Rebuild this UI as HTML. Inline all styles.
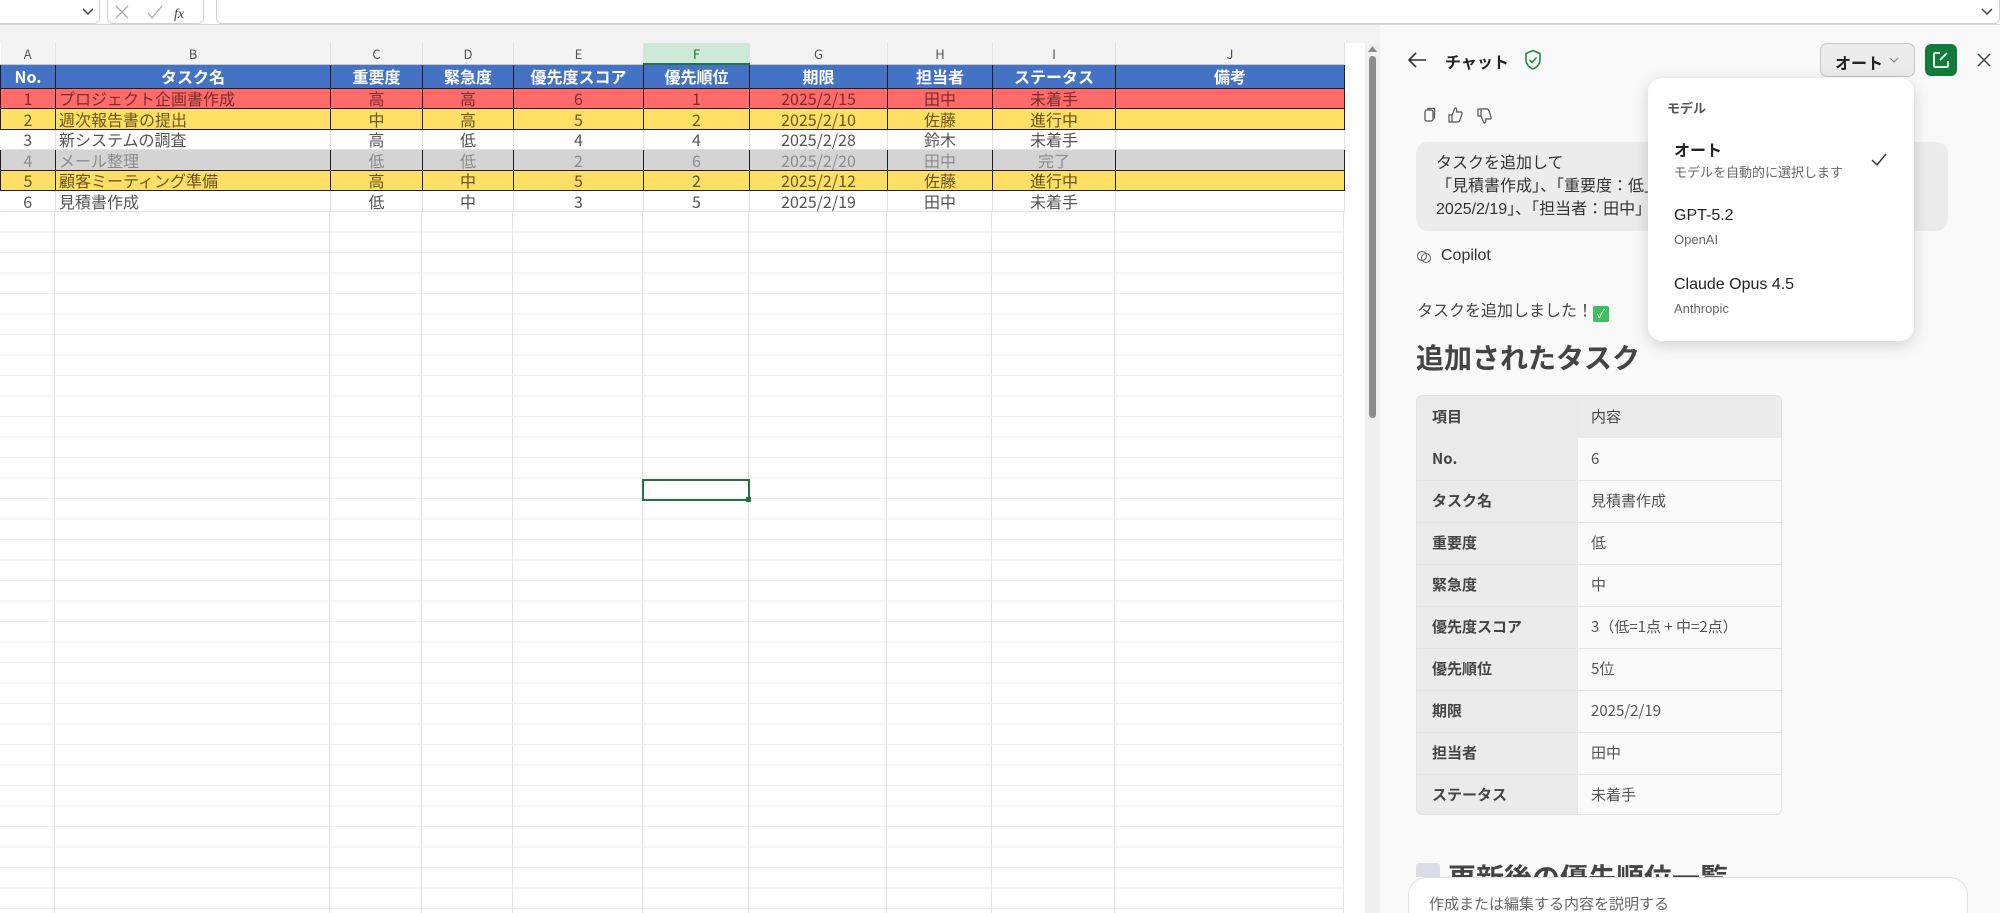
<!DOCTYPE html>
<html style="overflow:hidden;width:2000px;height:913px"><head><meta charset="utf-8">
<style>
*{box-sizing:border-box;margin:0;padding:0}
body{width:2000px;height:913px;overflow:hidden;background:#fff;font-family:"Liberation Sans","Noto Sans CJK JP",sans-serif;position:relative}
.abs{position:absolute}
#topbar{left:0;top:0;width:2000px;height:25px;background:#fff;border-bottom:1px solid #d6d6d6}
#band{left:0;top:25px;width:1380px;height:18px;background:#f3f3f3}
table.sh{position:absolute;left:0;top:43px;border-collapse:collapse;table-layout:fixed;font-family:"Noto Sans CJK JP",sans-serif;font-size:16px}
table.sh td{padding:0;text-align:center;white-space:nowrap;overflow:hidden;line-height:1}
tr.colh td{height:21px;background:#f3f3f3;color:#555;font-size:13px;border-right:1px solid #e0e0e0;border-bottom:1px solid #c8c8c8}
tr.colh td.sel{background:#cfe9d8;color:#1d6b3a;border-bottom:2px solid #217346}
tr.hd td{height:24px;background:#4472c4;color:#fff;font-weight:bold;border:1px solid #1f1f1f;font-size:16px}
tr.r td{height:20.5px;border:1px solid #1f1f1f}
tr.red td{background:#ff6b6b;color:#7a2e2e}
tr.yel td{background:#ffdf66;color:#6b5518}
tr.gry td{background:#d4d4d4;color:#8c8c8c}
tr.wht td{background:#fff;color:#555;border:none;border-right:1px solid #e1e1e1;border-bottom:1px solid #e1e1e1}
td.l{text-align:left!important;padding-left:3px!important}
#grid{left:0;top:212px;width:1344px;height:701px;
background-image:repeating-linear-gradient(to bottom,transparent 0,transparent 19.5px,#ececec 19.5px,#ececec 20.5px),
linear-gradient(to right,transparent 54px,#e1e1e1 54px,#e1e1e1 55px,transparent 55px,transparent 329px,#e1e1e1 329px,#e1e1e1 330px,transparent 330px,transparent 421px,#e1e1e1 421px,#e1e1e1 422px,transparent 422px,transparent 512px,#e1e1e1 512px,#e1e1e1 513px,transparent 513px,transparent 642px,#e1e1e1 642px,#e1e1e1 643px,transparent 643px,transparent 748px,#e1e1e1 748px,#e1e1e1 749px,transparent 749px,transparent 886px,#e1e1e1 886px,#e1e1e1 887px,transparent 887px,transparent 991px,#e1e1e1 991px,#e1e1e1 992px,transparent 992px,transparent 1114px,#e1e1e1 1114px,#e1e1e1 1115px,transparent 1115px,transparent 1343px,#e1e1e1 1343px,#e1e1e1 1344px,transparent 1344px)}
#panel{left:1380px;top:26px;width:620px;height:887px;background:#f9f9f9}
.p{position:absolute;color:#333}
.lbl{background:#ebebeb;font-weight:bold}
</style></head><body>
<div id="topbar" class="abs"></div>
<div class="abs" style="left:0;top:0;width:100px;height:24px;border:1px solid #d0d0d0;border-left:none;border-top:none;border-radius:0 0 6px 0;background:#fff"></div>
<svg class="abs" style="left:81px;top:7px" width="14" height="10"><path d="M2 2l5 5 5-5" stroke="#444" stroke-width="1.5" fill="none"/></svg>
<div class="abs" style="left:107px;top:0;width:97px;height:24px;border:1px solid #d0d0d0;border-top:none;border-radius:0 0 6px 6px;background:#fff"></div>
<svg class="abs" style="left:114px;top:4px" width="80" height="18"><path d="M2 2l12 12M14 2L2 14" stroke="#aaa" stroke-width="1.3"/><path d="M34 9l4 5 10-12" stroke="#aaa" stroke-width="1.3" fill="none"/><text x="60" y="14" font-family="Liberation Serif" font-style="italic" font-size="14" fill="#444">fx</text></svg>
<div class="abs" style="left:216px;top:0;width:1784px;height:24px;border:1px solid #d0d0d0;border-top:none;border-radius:0 0 6px 6px;background:#fff"></div>
<svg class="abs" style="left:1980px;top:7px" width="14" height="10"><path d="M2 2l5 5 5-5" stroke="#444" stroke-width="1.5" fill="none"/></svg>
<div id="band" class="abs"></div>
<div id="grid" class="abs"></div>
<table class="sh">
<colgroup><col style="width:55px"><col style="width:275px"><col style="width:92px"><col style="width:91px"><col style="width:130px"><col style="width:106px"><col style="width:138px"><col style="width:105px"><col style="width:123px"><col style="width:229px"></colgroup>
<tr class="colh"><td>A</td><td>B</td><td>C</td><td>D</td><td>E</td><td class="sel">F</td><td>G</td><td>H</td><td>I</td><td>J</td></tr>
<tr class="hd"><td>No.</td><td>タスク名</td><td>重要度</td><td>緊急度</td><td>優先度スコア</td><td>優先順位</td><td>期限</td><td>担当者</td><td>ステータス</td><td>備考</td></tr>
<tr class="r red"><td>1</td><td class="l">プロジェクト企画書作成</td><td>高</td><td>高</td><td>6</td><td>1</td><td>2025/2/15</td><td>田中</td><td>未着手</td><td></td></tr>
<tr class="r yel"><td>2</td><td class="l">週次報告書の提出</td><td>中</td><td>高</td><td>5</td><td>2</td><td>2025/2/10</td><td>佐藤</td><td>進行中</td><td></td></tr>
<tr class="r wht" style="border-top:1px solid #1f1f1f"><td>3</td><td class="l">新システムの調査</td><td>高</td><td>低</td><td>4</td><td>4</td><td>2025/2/28</td><td>鈴木</td><td>未着手</td><td></td></tr>
<tr class="r gry"><td>4</td><td class="l">メール整理</td><td>低</td><td>低</td><td>2</td><td>6</td><td>2025/2/20</td><td>田中</td><td>完了</td><td></td></tr>
<tr class="r yel"><td>5</td><td class="l">顧客ミーティング準備</td><td>高</td><td>中</td><td>5</td><td>2</td><td>2025/2/12</td><td>佐藤</td><td>進行中</td><td></td></tr>
<tr class="r wht"><td>6</td><td class="l">見積書作成</td><td>低</td><td>中</td><td>3</td><td>5</td><td>2025/2/19</td><td>田中</td><td>未着手</td><td></td></tr>
</table>
<div class="abs" style="left:642px;top:479px;width:108px;height:22px;border:2px solid #217346"></div>
<div class="abs" style="left:746px;top:497px;width:5px;height:5px;background:#217346"></div>
<div class="abs" style="left:1365px;top:43px;width:15px;height:870px;background:#f0f0f0"></div>
<svg class="abs" style="left:1367px;top:45px" width="11" height="8"><path d="M1 7L5.5 1 10 7z" fill="#888"/></svg>
<div class="abs" style="left:1369px;top:56px;width:7px;height:362px;background:#8c8c8c;border-radius:4px"></div>
<div id="panel" class="abs"></div>
<svg class="abs" style="left:1406px;top:50px" width="22" height="20"><path d="M20 10H3M10 3L3 10l7 7" stroke="#333" stroke-width="1.6" fill="none"/></svg>
<div class="p" style="left:1445px;top:49px;font-size:16px;font-weight:bold;color:#222">チャット</div>
<svg class="abs" style="left:1524px;top:49px" width="18" height="22"><path d="M9 1.5L2 4.5v6c0 4.5 3 8 7 9.5 4-1.5 7-5 7-9.5v-6z" stroke="#1f8a43" stroke-width="1.6" fill="none"/><path d="M5.5 11l2.5 2.5 4.5-5" stroke="#1f8a43" stroke-width="1.6" fill="none"/></svg>
<div class="abs" style="left:1820px;top:43px;width:95px;height:34px;background:#ececec;border:1px solid #c8c8c8;border-radius:7px"></div>
<div class="p" style="left:1835px;top:50px;font-size:16px;font-weight:bold;color:#222">オート</div>
<svg class="abs" style="left:1889px;top:57px" width="10" height="7"><path d="M1 1l4 4 4-4" stroke="#888" stroke-width="1.2" fill="none"/></svg>
<div class="abs" style="left:1925px;top:44px;width:32px;height:32px;background:#117a3c;border-radius:6px"></div>
<svg class="abs" style="left:1931px;top:50px" width="20" height="20"><path d="M9 3H4a1 1 0 0 0-1 1v12a1 1 0 0 0 1 1h12a1 1 0 0 0 1-1v-5" stroke="#fff" stroke-width="1.8" fill="none"/><path d="M16 3l-7 7" stroke="#fff" stroke-width="1.8"/></svg>
<svg class="abs" style="left:1976px;top:52px" width="16" height="16"><path d="M2 2l12 12M14 2L2 14" stroke="#444" stroke-width="1.5"/></svg>
<svg class="abs" style="left:1422px;top:106px" width="80" height="18"><rect x="3" y="4" width="8" height="11" rx="2" stroke="#555" stroke-width="1.3" fill="none"/><path d="M6 4V2.5h6.5v10" stroke="#555" stroke-width="1.3" fill="none"/><path d="M30 16h-3V9h3zM30 9l3-7c2 0 2 2 1.5 4H39c1 0 1.5 1 1 2l-2 6c-.5 1-1 2-2 2h-6" stroke="#555" stroke-width="1.2" fill="none"/><path d="M56 3h3v7h-3zM59 10l3 7c2 0 2-2 1.5-4H68c1 0 1.5-1 1-2l-2-6c-.5-1-1-2-2-2h-6" stroke="#555" stroke-width="1.2" fill="none"/></svg>
<div class="abs" style="left:1416px;top:142px;width:532px;height:89px;background:#ececec;border-radius:12px"></div>
<div class="p" style="left:1436px;top:152px;font-size:16px;line-height:23px;color:#333">タスクを追加して<br>「見積書作成」、「重要度：低」<br>2025/2/19」、「担当者：田中」</div>
<svg class="abs" style="left:1416px;top:249px" width="16" height="16"><circle cx="6" cy="7" r="4.5" stroke="#666" stroke-width="1.1" fill="none"/><circle cx="10" cy="9" r="4.5" stroke="#666" stroke-width="1.1" fill="none"/></svg>
<div class="p" style="left:1441px;top:247px;font-size:16px;color:#333">Copilot</div>
<div class="p" style="left:1417px;top:297px;font-size:16px;color:#444">タスクを追加しました！<span style="display:inline-block;width:16px;height:16px;background:#3fbf5f;border-radius:2px;vertical-align:-2px;color:#fff;font-size:12px;text-align:center;line-height:16px">✓</span></div>
<div class="p" style="left:1416px;top:337px;font-size:28px;font-weight:bold;color:#444">追加されたタスク</div>
<div class="abs" style="left:1416px;top:395px;width:366px;height:420px;border:1px solid #e2e2e2;border-radius:6px;overflow:hidden;background:#fafafa;font-family:'Noto Sans CJK JP',sans-serif;font-size:15px;color:#444">
<div class="abs" style="left:0;top:0;width:366px;height:42px;background:#ebebeb"></div>
<div class="abs lbl" style="left:0;top:42px;width:160px;height:378px"></div>
<div class="abs" style="left:160px;top:0;width:1px;height:420px;background:#e8e8e8"></div>
<div class="p" style="left:15px;top:10px;font-weight:bold;color:#444">項目</div><div class="p" style="left:174px;top:10px;color:#444">内容</div>
<div class="p" style="left:15px;top:52px;font-weight:bold;color:#444">No.</div><div class="p" style="left:174px;top:52px;color:#555">6</div>
<div class="abs" style="left:0;top:84px;width:366px;height:1px;background:#e4e4e4"></div>
<div class="p" style="left:15px;top:94px;font-weight:bold;color:#444">タスク名</div><div class="p" style="left:174px;top:94px;color:#555">見積書作成</div>
<div class="abs" style="left:0;top:126px;width:366px;height:1px;background:#e4e4e4"></div>
<div class="p" style="left:15px;top:136px;font-weight:bold;color:#444">重要度</div><div class="p" style="left:174px;top:136px;color:#555">低</div>
<div class="abs" style="left:0;top:168px;width:366px;height:1px;background:#e4e4e4"></div>
<div class="p" style="left:15px;top:178px;font-weight:bold;color:#444">緊急度</div><div class="p" style="left:174px;top:178px;color:#555">中</div>
<div class="abs" style="left:0;top:210px;width:366px;height:1px;background:#e4e4e4"></div>
<div class="p" style="left:15px;top:220px;font-weight:bold;color:#444">優先度スコア</div><div class="p" style="left:174px;top:220px;color:#555">3（低=1点 + 中=2点）</div>
<div class="abs" style="left:0;top:252px;width:366px;height:1px;background:#e4e4e4"></div>
<div class="p" style="left:15px;top:262px;font-weight:bold;color:#444">優先順位</div><div class="p" style="left:174px;top:262px;color:#555">5位</div>
<div class="abs" style="left:0;top:294px;width:366px;height:1px;background:#e4e4e4"></div>
<div class="p" style="left:15px;top:304px;font-weight:bold;color:#444">期限</div><div class="p" style="left:174px;top:304px;color:#555">2025/2/19</div>
<div class="abs" style="left:0;top:336px;width:366px;height:1px;background:#e4e4e4"></div>
<div class="p" style="left:15px;top:346px;font-weight:bold;color:#444">担当者</div><div class="p" style="left:174px;top:346px;color:#555">田中</div>
<div class="abs" style="left:0;top:378px;width:366px;height:1px;background:#e4e4e4"></div>
<div class="p" style="left:15px;top:388px;font-weight:bold;color:#444">ステータス</div><div class="p" style="left:174px;top:388px;color:#555">未着手</div>
</div>
<div class="abs" style="left:1416px;top:857px;width:500px;height:20px;overflow:hidden">
<div class="p" style="left:0;top:6px;width:24px;height:24px;background:#dcdce6;border-radius:3px"></div>
<div class="p" style="left:32px;top:0;font-size:28px;font-weight:bold;color:#444;white-space:nowrap">更新後の優先順位一覧</div>
</div>
<div class="abs" style="left:1408px;top:877px;width:560px;height:36px;background:#fff;border:1px solid #e0e0e0;border-bottom:none;border-radius:18px 18px 0 0"></div>
<div class="p" style="left:1429px;top:893px;font-size:15px;color:#666">作成または編集する内容を説明する</div>
<div class="abs" style="left:1648px;top:78px;width:266px;height:263px;background:#fff;border-radius:14px;box-shadow:0 4px 16px rgba(0,0,0,.16)"></div>
<div class="p" style="left:1667px;top:98px;font-size:13px;font-weight:bold;color:#555">モデル</div>
<div class="p" style="left:1674px;top:137px;font-size:16px;font-weight:bold;color:#222">オート</div>
<div class="p" style="left:1674px;top:162px;font-size:13px;color:#666">モデルを自動的に選択します</div>
<svg class="abs" style="left:1870px;top:152px" width="18" height="16"><path d="M2 8l5 5L16 2" stroke="#333" stroke-width="1.4" fill="none"/></svg>
<div class="p" style="left:1674px;top:207px;font-size:16px;color:#222">GPT-5.2</div>
<div class="p" style="left:1674px;top:232px;font-size:13px;color:#666">OpenAI</div>
<div class="p" style="left:1674px;top:276px;font-size:16px;color:#222">Claude Opus 4.5</div>
<div class="p" style="left:1674px;top:301px;font-size:13px;color:#666">Anthropic</div>
</body></html>
